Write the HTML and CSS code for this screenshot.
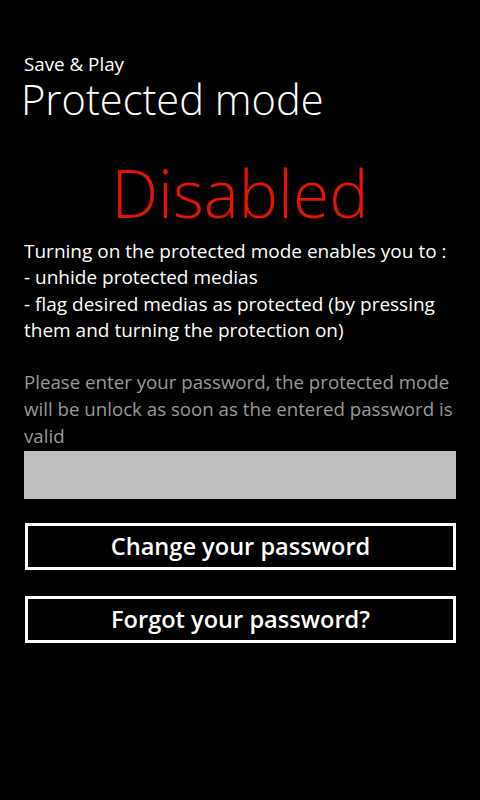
FILE: index.html
```html
<!DOCTYPE html>
<html>
<head>
<meta charset="utf-8">
<link rel="stylesheet" href="styles.css">
</head>
<body>
<div class="page">
  <div class="app-title">Save &amp; Play</div>
  <div class="page-title">Protected mode</div>
  <div class="status">Disabled</div>
  <p class="desc">Turning on the protected mode enables you to :<br>- unhide protected medias<br>- flag desired medias as protected (by pressing them and turning the protection on)</p>
  <p class="hint">Please enter your password, the protected mode will be unlock as soon as the entered password is valid</p>
  <div class="input"></div>
  <div class="btn">Change your password</div>
  <div class="btn">Forgot your password?</div>
</div>
</body>
</html>
```
FILE: styles.css
```css
html, body {
  margin: 0;
  padding: 0;
  background: #000;
  color: #fff;
  width: 480px;
  height: 800px;
  overflow: hidden;
  font-family: "Open Sans", "Noto Sans", sans-serif;
}
.page {
  padding: 54px 24px 0 24px;
  display: flex;
  flex-direction: column;
}
.app-title {
  font-size: 18.8px;
  line-height: 20px;
  font-weight: 400;
}
.page-title {
  font-size: 41.6px;
  font-weight: 300;
  line-height: 46px;
  margin-left: -3px;
  margin-top: 2px;
}
.status {
  font-size: 66px;
  font-weight: 300;
  line-height: 90px;
  color: #e51400;
  text-align: center;
  margin-top: 24.7px;
}
.desc {
  margin: 1px 0 0 0;
  font-size: 19px;
  line-height: 26.5px;
}
.hint {
  margin: 24px 0 0 0;
  font-size: 18.7px;
  line-height: 27px;
  color: #999;
}
.input {
  margin-top: 2px;
  height: 48px;
  background: #bfbfbf;
}
.btn {
  margin-top: 24px;
  margin-left: 1px;
  height: 41px;
  border: 3px solid #fff;
  display: flex;
  align-items: center;
  justify-content: center;
  font-size: 23.6px;
  font-weight: 600;
}
.btn + .btn {
  margin-top: 26px;
}
```
